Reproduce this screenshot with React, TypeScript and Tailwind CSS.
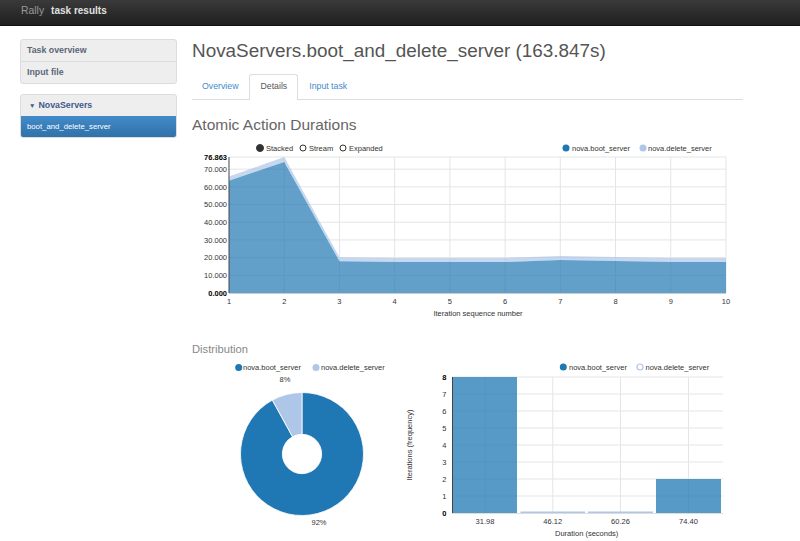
import React from "react";

const font = { fontFamily: '"Liberation Sans", Arial, sans-serif' };

const boot = [63.5, 74.0, 17.9, 17.5, 17.5, 17.5, 18.6, 18.1, 17.5, 17.5];
const del = [2.3, 2.86, 2.26, 2.3, 2.3, 2.3, 2.3, 2.2, 2.3, 2.3];

const ax = (i: number) => 229 + i * 55.22;
const ay = (v: number) => 293 - v * 1.7694;

function areaPath(top: number[], bottom: number[]) {
  const up = top.map((v, i) => `${ax(i)},${ay(v)}`).join(" L");
  const down = bottom
    .map((v, i) => `${ax(i)},${ay(v)}`)
    .reverse()
    .join(" L");
  return `M${up} L${down} Z`;
}

function AreaChart() {
  const totals = boot.map((v, i) => v + del[i]);
  const zeros = boot.map(() => 0);
  const yTicks = [10, 20, 30, 40, 50, 60, 70];
  return (
    <svg width={551} height={183} viewBox="192 137 551 183" style={font}>
      {/* legend */}
      <circle cx={260} cy={148} r={3.5} fill="#333" stroke="#333" />
      <text x={266} y={150.7} fontSize={7.5} fill="#333">Stacked</text>
      <circle cx={303} cy={148} r={3} fill="none" stroke="#333" />
      <text x={309} y={150.7} fontSize={7.5} fill="#333">Stream</text>
      <circle cx={343} cy={148} r={3} fill="none" stroke="#333" />
      <text x={349} y={150.7} fontSize={7.5} fill="#333">Expanded</text>
      <circle cx={566} cy={148} r={3.5} fill="#1f77b4" />
      <text x={572} y={150.7} fontSize={7.5} fill="#333">nova.boot_server</text>
      <circle cx={643} cy={148} r={3.5} fill="#aec7e8" />
      <text x={648} y={150.7} fontSize={7.5} fill="#333">nova.delete_server</text>

      {/* grid */}
      {yTicks.map((t) => (
        <line key={t} x1={229} x2={726} y1={ay(t)} y2={ay(t)} stroke="#e5e5e5" />
      ))}
      <line x1={229} x2={726} y1={157} y2={157} stroke="#e5e5e5" />
      {boot.map((_, i) =>
        i > 0 ? <line key={i} x1={ax(i)} x2={ax(i)} y1={157} y2={293} stroke="#e5e5e5" /> : null
      )}

      {/* areas */}
      <path d={areaPath(totals, boot)} fill="#aec7e8" fillOpacity={0.7} />
      <path d={areaPath(boot, zeros)} fill="#1f77b4" fillOpacity={0.7} />

      {/* axes */}
      <line x1={229} x2={229} y1={157} y2={293} stroke="#444" />
      <line x1={229} x2={726} y1={293.5} y2={293.5} stroke="#ccc" />
      {yTicks.map((t) => (
        <text key={t} x={227} y={ay(t) + 2.7} fontSize={7.5} fill="#333" textAnchor="end">
          {t.toFixed(3)}
        </text>
      ))}
      <text x={227} y={159.7} fontSize={7.5} fontWeight="bold" fill="#000" textAnchor="end">76.863</text>
      <text x={227} y={295.7} fontSize={7.5} fontWeight="bold" fill="#000" textAnchor="end">0.000</text>
      {boot.map((_, i) => (
        <text key={i} x={ax(i)} y={303.7} fontSize={7.5} fill="#333" textAnchor="middle">
          {i + 1}
        </text>
      ))}
      <text x={478} y={315.5} fontSize={7.5} fill="#333" textAnchor="middle">
        Iteration sequence number
      </text>
    </svg>
  );
}

function arc(cx: number, cy: number, r: number, ri: number, a0: number, a1: number) {
  const rad = (d: number) => (d * Math.PI) / 180;
  const p = (rr: number, a: number) => `${cx + rr * Math.sin(rad(a))},${cy - rr * Math.cos(rad(a))}`;
  const large = a1 - a0 > 180 ? 1 : 0;
  return `M${p(r, a0)} A${r},${r} 0 ${large} 1 ${p(r, a1)} L${p(ri, a1)} A${ri},${ri} 0 ${large} 0 ${p(ri, a0)} Z`;
}

function PieChart() {
  return (
    <svg width={208} height={182} viewBox="192 357 208 182" style={font}>
      <circle cx={238.7} cy={367.5} r={3.5} fill="#1f77b4" />
      <text x={243} y={370.2} fontSize={7.5} fill="#333">nova.boot_server</text>
      <circle cx={316} cy={367.5} r={3.5} fill="#aec7e8" />
      <text x={321} y={370.2} fontSize={7.5} fill="#333">nova.delete_server</text>

      <path d={arc(302, 454, 61.5, 19.7, 0, 331.2)} fill="#1f77b4" stroke="#fff" strokeWidth={0.8} />
      <path d={arc(302, 454, 61.5, 19.7, 331.2, 360)} fill="#aec7e8" stroke="#fff" strokeWidth={0.8} />

      <text x={285} y={381.7} fontSize={7.5} fill="#333" textAnchor="middle">8%</text>
      <text x={319} y={525.2} fontSize={7.5} fill="#333" textAnchor="middle">92%</text>
    </svg>
  );
}

const bins = [
  { label: "31.98", x0: 453, x1: 517, v: 8 },
  { label: "46.12", x0: 520.5, x1: 585, v: 0 },
  { label: "60.26", x0: 588, x1: 653, v: 0 },
  { label: "74.40", x0: 656, x1: 721, v: 2 },
];

function BarChart() {
  const by = (v: number) => 513 - v * 17;
  return (
    <svg width={343} height={182} viewBox="400 357 343 182" style={font}>
      <circle cx={563.3} cy={367} r={3.5} fill="#1f77b4" />
      <text x={569} y={369.7} fontSize={7.5} fill="#333">nova.boot_server</text>
      <circle cx={640} cy={367} r={3} fill="none" stroke="#aec7e8" strokeWidth={1.2} />
      <text x={645.5} y={369.7} fontSize={7.5} fill="#333">nova.delete_server</text>

      {[1, 2, 3, 4, 5, 6, 7, 8].map((t) => (
        <line key={t} x1={452} x2={723} y1={by(t)} y2={by(t)} stroke="#e5e5e5" />
      ))}
      {bins.map((b) => (
        <line key={b.label} x1={(b.x0 + b.x1) / 2} x2={(b.x0 + b.x1) / 2} y1={377} y2={513} stroke="#e5e5e5" />
      ))}

      {bins.map((b) =>
        b.v > 0 ? (
          <rect key={b.label} x={b.x0} y={by(b.v)} width={b.x1 - b.x0} height={b.v * 17} fill="#1f77b4" fillOpacity={0.75} />
        ) : (
          <rect key={b.label} x={b.x0} y={511.5} width={b.x1 - b.x0} height={1.5} fill="#aec7e8" />
        )
      )}

      <line x1={452.5} x2={452.5} y1={377} y2={513} stroke="#444" />
      <line x1={452} x2={723} y1={513.5} y2={513.5} stroke="#ddd" />
      {[0, 1, 2, 3, 4, 5, 6, 7, 8].map((t) => (
        <text
          key={t}
          x={446.5}
          y={by(t) + 2.7}
          fontSize={7.5}
          fill={t === 0 || t === 8 ? "#000" : "#333"}
          fontWeight={t === 0 || t === 8 ? "bold" : "normal"}
          textAnchor="end"
        >
          {t}
        </text>
      ))}
      {bins.map((b) => (
        <text key={b.label} x={(b.x0 + b.x1) / 2} y={523.5} fontSize={7.5} fill="#333" textAnchor="middle">
          {b.label}
        </text>
      ))}
      <text x={586.7} y={535.5} fontSize={7.5} fill="#333" textAnchor="middle">Duration (seconds)</text>
      <text
        x={0}
        y={0}
        fontSize={7.5}
        fill="#333"
        textAnchor="middle"
        transform="translate(412 445) rotate(-90)"
      >
        Iterations (frequency)
      </text>
    </svg>
  );
}

export default function App() {
  return (
    <div className="w-[800px] h-[541px] overflow-hidden bg-white" style={font}>
      <div className="h-[26px] bg-gradient-to-b from-[#3a3a3a] to-[#1f1f1f] border-b border-[#111] flex items-center pb-[4px] pl-[21px]">
        <span className="text-[10.4px] text-[#9a9a9a]">Rally</span>
        <span className="ml-[7px] text-[10px] font-bold text-[#e0e0e0]">task results</span>
      </div>

      <div className="flex">
        <aside className="ml-[20px] mt-[13px] w-[157px] shrink-0">
          <div className="rounded-[3px] border border-[#dcdcdc] bg-[#eeeeee] text-[8.8px] font-bold text-[#5b6779]">
            <div className="h-[22px] px-[6px] flex items-center border-b border-[#dcdcdc]">Task overview</div>
            <div className="h-[21px] px-[6px] flex items-center">Input file</div>
          </div>
          <div className="mt-[10px] rounded-[3px] border border-[#dcdcdc] bg-[#eeeeee] overflow-hidden">
            <div className="h-[21px] px-[8px] flex items-center text-[8.8px] font-bold text-[#3f5a8c]">
              <span className="text-[6.5px] mr-[3px]">▼</span>NovaServers
            </div>
            <div className="h-[21px] px-[6px] flex items-center text-[7.75px] text-white bg-gradient-to-b from-[#428bca] to-[#3071a9]">
              boot_and_delete_server
            </div>
          </div>
        </aside>

        <main className="ml-[15px] w-[551px]">
          <h1 className="mt-[13px] text-[18.9px] leading-[23px] text-[#555]">
            NovaServers.boot_and_delete_server (163.847s)
          </h1>

          <div className="mt-[13px] flex items-end border-b border-[#ddd] h-[25px] text-[8.75px]">
            <div className="px-[10px] mr-[1px] h-[25px] flex items-center text-[#428bca]">Overview</div>
            <div className="px-[10px] mr-[1px] h-[26px] -mb-px pb-px flex items-center text-[#555] bg-white border border-[#ddd] border-b-0 rounded-t-[3px]">
              Details
            </div>
            <div className="px-[10px] h-[25px] flex items-center text-[#428bca]">Input task</div>
          </div>

          <h2 className="mt-[16px] text-[15.5px] leading-[18px] text-[#666]">Atomic Action Durations</h2>
          <div className="mt-[3px]">
            <AreaChart />
          </div>

          <h3 className="mt-[22px] text-[11.2px] leading-[14px] text-[#888]">Distribution</h3>
          <div className="mt-[1px] flex">
            <PieChart />
            <BarChart />
          </div>
        </main>
      </div>
    </div>
  );
}
